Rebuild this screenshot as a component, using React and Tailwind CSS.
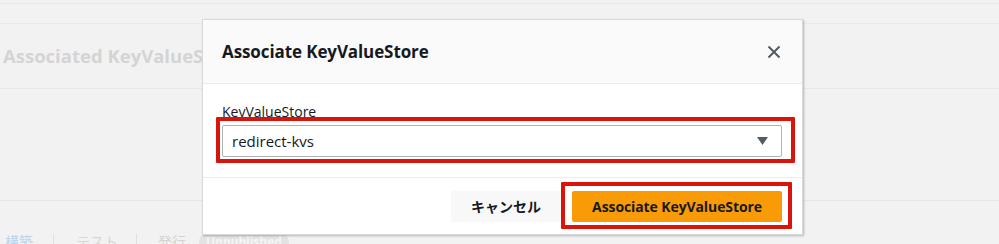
import React from "react";

const font = { fontFamily: '"Open Sans", "Noto Sans CJK JP", sans-serif' };

export default function App() {
  return (
    <div
      className="relative w-[999px] h-[244px] overflow-hidden bg-[#f2f2f2]"
      style={font}
    >
      {/* background page */}
      <div className="flex flex-col">
        <div className="h-[3px]" />
        <div className="h-px bg-[#e6e6e6]" />
        <div className="h-[19px]" />
        <div className="h-px bg-[#eaeaea]" />
        <div className="h-[64px] flex items-center pl-[3px]">
          <span className="text-[18.5px] font-bold text-[#d4d4d4]">
            Associated KeyValueStore
          </span>
        </div>
        <div className="h-px bg-[#e8e8e8]" />
        <div className="h-[111px]" />
        <div className="h-px bg-[#e6e6e6]" />
        <div className="flex items-end h-[43px]">
          <div className="flex items-center h-[15px] translate-y-[5px]">
            <span className="pl-[5px] pr-[20px] text-[14px] text-[#b9d3ea] leading-[16px]">構築</span>
            <div className="w-px h-[15px] bg-[#e0e0e0]" />
            <span className="pl-[22px] pr-[18px] text-[14px] text-[#d6d6d6] leading-[16px]">テスト</span>
            <div className="w-px h-[15px] bg-[#e0e0e0]" />
            <span className="pl-[21px] pr-[13px] text-[14px] text-[#d2d2d2] leading-[16px]">発行</span>
            <span className="rounded-full bg-[#e3e3e3] px-[7px] text-[12px] text-[#f5f5f5] font-bold leading-[16px]">
              Unpublished
            </span>
          </div>
        </div>
      </div>

      {/* modal */}
      <div className="absolute left-[202px] top-[19px] w-[601px] h-[216px] bg-white border border-[#d5dbdb] shadow-[1px_1px_2px_rgba(0,0,0,0.25)] flex flex-col">
        <div className="h-[64px] bg-[#fafafa] border-b border-[#eaeded] flex items-center justify-between pl-[19px] pr-[20px]">
          <span className="text-[17px] font-bold text-[#16191f] tracking-[-0.1px]">
            Associate KeyValueStore
          </span>
          <svg width="14" height="14" viewBox="0 0 14 14" className="mr-[1px]">
            <path d="M1.5 1.5 L12.5 12.5 M12.5 1.5 L1.5 12.5" stroke="#545b64" strokeWidth="2" />
          </svg>
        </div>
        <div className="flex-1 pl-[19px] pr-[20px] pt-[18px]">
          <div className="text-[14px] text-[#16191f] leading-[20px]">KeyValueStore</div>
          <div className="relative mt-[3px]">
            <div className="h-[32px] border border-[#aab7b8] rounded-[2px] flex items-center justify-between pl-[9px] pr-[13px]">
              <span className="text-[15px] text-[#16191f]">redirect-kvs</span>
              <svg width="11" height="8" viewBox="0 0 11 8">
                <path d="M0 0 H11 L5.5 8 Z" fill="#545b64" />
              </svg>
            </div>
            <div className="absolute left-[-6px] right-[-13px] top-[-8px] bottom-[-6px] border-[4px] border-[#d9140b] rounded-[1px]" />
          </div>
        </div>
        <div className="h-[57px] border-t border-[#eaeded] flex items-center justify-end gap-[11px] pr-[20px]">
          <div className="w-[110px] h-[31px] bg-[#f8f8f8] flex items-center justify-center text-[14px] font-bold text-[#16191f]">
            キャンセル
          </div>
          <div className="relative">
            <div className="w-[210px] h-[31px] bg-[#f99b07] rounded-[2px] flex items-center justify-center text-[14px] font-bold text-[#16191f] tracking-[-0.1px]">
              Associate KeyValueStore
            </div>
            <div className="absolute left-[-11px] right-[-10px] top-[-9px] bottom-[-7px] border-[4px] border-[#d9140b] rounded-[1px]" />
          </div>
        </div>
      </div>
    </div>
  );
}
